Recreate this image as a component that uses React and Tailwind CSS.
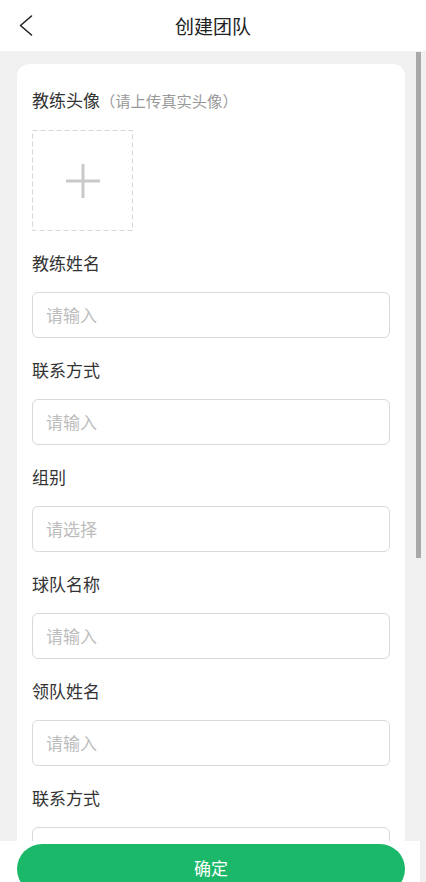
import React from "react";

const fields = [
  { label: "教练姓名", ph: "请输入" },
  { label: "联系方式", ph: "请输入" },
  { label: "组别", ph: "请选择" },
  { label: "球队名称", ph: "请输入" },
  { label: "领队姓名", ph: "请输入" },
  { label: "联系方式", ph: "" },
];

export default function App() {
  return (
    <div
      className="relative w-[426px] h-[882px] overflow-hidden bg-[#f0f0f0] flex flex-col"
      style={{ fontFamily: '"Noto Sans CJK SC", "Noto Sans", sans-serif' }}
    >
      <header className="relative h-[51px] shrink-0 bg-white flex items-center justify-center">
        <svg className="absolute left-[14px] top-[10px]" width="24" height="32" viewBox="0 0 24 32">
          <polyline points="17.5,6 6.5,15.5 17.5,25" fill="none" stroke="#222" strokeWidth="1.6" strokeLinecap="round" strokeLinejoin="round" />
        </svg>
        <span className="text-[19px] leading-[26px] text-[#222] mt-[1px]">创建团队</span>
      </header>

      <main className="flex-1 px-[17px] pt-[13px] w-[422px]">
        <div className="bg-white rounded-[12px] px-[15px] pt-[24px] pb-[40px]">
          <div className="flex items-baseline h-[24px] leading-[24px]">
            <span className="text-[17px] text-[#333]">教练头像</span>
            <span className="text-[15.3px] text-[#999]">（请上传真实头像）</span>
          </div>
          <div className="relative mt-[18px] w-[101px] h-[101px] flex items-center justify-center">
            <svg className="absolute inset-0" width="101" height="101" viewBox="0 0 101 101">
              <rect x="0.5" y="0.5" width="100" height="100" fill="none" stroke="#d6d6d6" strokeWidth="1" strokeDasharray="5 3" />
            </svg>
            <svg width="34" height="34" viewBox="0 0 34 34">
              <rect x="0" y="15.5" width="34" height="3" fill="#c9c9c9" />
              <rect x="15.5" y="0" width="3" height="34" fill="#c9c9c9" />
            </svg>
          </div>
          {fields.map((f, i) => (
            <div key={i} className="mt-[20px]">
              <div className="h-[24px] leading-[24px] text-[17px] text-[#333]">{f.label}</div>
              <div className="mt-[17px] h-[46px] border border-[#d9d9d9] rounded-[6px] flex items-center px-[13px]">
                <span className="text-[17px] text-[#bdbdbd]">{f.ph}</span>
              </div>
            </div>
          ))}
        </div>
      </main>

      <div className="absolute left-[416px] top-[52px] w-[5px] h-[506px] bg-[#a8a8a8]" />

      <div className="absolute left-0 bottom-0 w-[420px] h-[41px] bg-white">
        <div className="absolute left-[17px] top-[3px] w-[388px] h-[50px] rounded-full bg-[#1cb86a] flex justify-center pt-[12px]">
          <span className="text-[17px] leading-[24px] text-white">确定</span>
        </div>
      </div>
    </div>
  );
}
